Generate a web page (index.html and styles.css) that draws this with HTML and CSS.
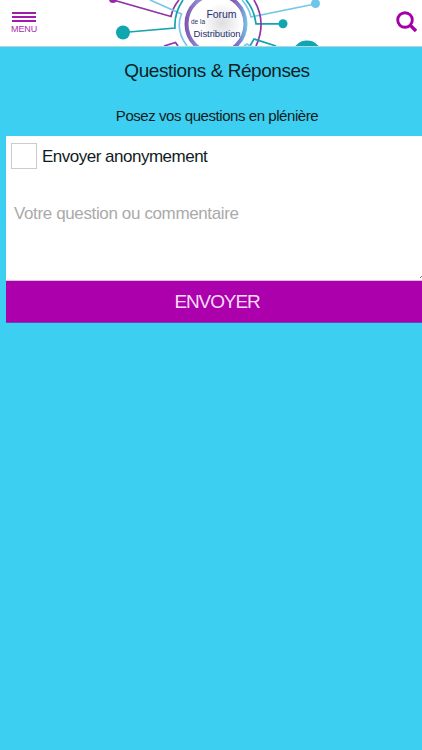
FILE: index.html
```html
<!DOCTYPE html>
<html lang="fr">
<head>
<meta charset="utf-8">
<meta name="viewport" content="width=device-width, initial-scale=1">
<title>Questions &amp; Réponses</title>
<link rel="stylesheet" href="styles.css">
</head>
<body>
<header class="topbar">
  <div class="menu">
    <span class="menu-bar"></span><span class="menu-bar"></span><span class="menu-bar"></span>
    <span class="menu-label">MENU</span>
  </div>
  <svg class="logo" width="240" height="46" viewBox="100 0 240 46">
    <defs>
      <linearGradient id="ring" gradientUnits="userSpaceOnUse" x1="185" y1="0" x2="247" y2="0">
        <stop offset="0" stop-color="#8054b0"/><stop offset=".2" stop-color="#8d8bd0"/><stop offset=".75" stop-color="#8b50b8"/><stop offset=".9" stop-color="#7b86cc"/><stop offset="1" stop-color="#75c5e8"/>
      </linearGradient>
      <radialGradient id="shade"><stop offset="0" stop-color="#dedee2"/><stop offset="1" stop-color="#fff"/></radialGradient>
    </defs>
    <g fill="none" stroke-width="1.7">
      <path d="M113 0L171 16.500Q173 7 179 0" stroke="#8f35a6"/>
      <path d="M150 0L181.500 14Q175 30 187 46" stroke="#79c7e8"/>
      <path d="M123 32.500L175 28Q174 13 183 0" stroke="#15a3ad"/>
      <path d="M164 46L175.500 42.500L178 46" stroke="#8f35a6"/>
      <path d="M315 4L251 17Q249 8 242 0" stroke="#79c7e8"/>
      <path d="M283 23.800H256Q254 9 246 0" stroke="#15a3ad"/>
      <path d="M254 0Q267 22 256 46" stroke="#8f35a6"/>
      <path d="M250 46L254 39L276 46" stroke="#15a3ad"/>
      <path d="M244 46L247 44L250 46" stroke="#79c7e8"/>
    </g>
    <circle cx="113" cy="-1" r="4" fill="#9c27ad"/>
    <circle cx="123" cy="32.500" r="7" fill="#10a6b0"/>
    <circle cx="315.500" cy="3.500" r="4.500" fill="#6bc6ea"/>
    <circle cx="283" cy="23.800" r="4.500" fill="#10a6b0"/>
    <circle cx="307" cy="55.500" r="15" fill="#10a6b0"/>
    <circle cx="222" cy="23" r="20" fill="url(#shade)"/>
    <circle cx="216" cy="24" r="29.500" fill="none" stroke="url(#ring)" stroke-width="4"/>
    <g class="logo-text">
      <text x="206.500" y="17.500" font-size="10.500" textLength="30">Forum</text>
      <text x="191" y="24" font-size="6.500" textLength="14">de la</text>
      <text x="193.500" y="37" font-size="9.500" textLength="47">Distribution</text>
    </g>
  </svg>
  <svg class="search" width="22" height="22" viewBox="0 0 22 22" fill="none" stroke="#a400a8">
    <circle cx="9" cy="9" r="7.300" stroke-width="2.900"/>
    <path d="M14.500 14.500L20 20" stroke-width="3.400"/>
  </svg>
</header>
<main class="page">
  <h1 class="title">Questions &amp; Réponses</h1>
  <p class="intro">Posez vos questions en plénière</p>
  <form class="question">
    <label class="anonymous"><span class="box"></span><span class="anonymous-label">Envoyer anonymement</span></label>
    <div class="comment"><span class="placeholder">Votre question ou commentaire</span>
      <svg class="grip" width="2" height="3" viewBox="0 0 2 3"><path d="M0 3L2 1" stroke="#777" stroke-width="1"/></svg>
    </div>
    <div class="send"><span class="send-label">ENVOYER</span></div>
  </form>
</main>
</body>
</html>
```
FILE: styles.css
```css
* { box-sizing: border-box; }
body {
  margin: 0;
  height: 750px;
  overflow: hidden;
  background: #3dcff1;
  color: #101c22;
  font-family: "Liberation Sans", Arial, sans-serif;
}
.topbar {
  display: flex;
  height: 47px;
  background: #fff;
  border-bottom: 1px solid #b5d5dc;
}
.menu {
  display: flex;
  flex: none;
  flex-direction: column;
  gap: 2px;
  width: 100px;
  padding: 12px 0 0 12px;
}
.menu-bar { width: 24px; height: 2px; background: #a31bab; }
.menu-label {
  margin: -1px 0 0 -1px;
  color: #a72cae;
  font-size: 9px;
  line-height: 12px;
  letter-spacing: -.1px;
}
.logo { flex: none; }
.logo-text { fill: #1f2f6d; }
.search { flex: none; margin: 11px 4px 0 auto; }
.page { padding-left: 6px; }
.title, .intro { margin: 0 0 0 -6px; text-align: center; font-weight: 400; }
.title { padding: 12px 0 0 12px; font-size: 19px; line-height: 24px; letter-spacing: -.45px; }
.intro { padding: 23px 0 0 12px; font-size: 15px; line-height: 20px; letter-spacing: -.44px; }
.question { display: block; margin-top: 10px; background: #fff; }
.anonymous { display: flex; align-items: center; gap: 5px; height: 40px; padding-left: 5px; }
.box { width: 26px; height: 26px; border: 1px solid #ccc; }
.anonymous-label { padding-top: 2px; font-size: 17px; letter-spacing: -.5px; }
.comment { position: relative; height: 105px; padding: 28px 0 0 8px; border-bottom: 1px solid #ddbddd; }
.placeholder { color: #aaa; font-size: 17px; line-height: 20px; letter-spacing: -.37px; }
.grip { position: absolute; right: 0; bottom: 2px; }
.send {
  height: 42px;
  padding-left: 6px;
  background: #ac00ad;
  border-bottom: 1px solid #7441b5;
  color: #f8def8;
  text-align: center;
  line-height: 41px;
}
.send-label { font-size: 19px; letter-spacing: -1.100px; }
```
